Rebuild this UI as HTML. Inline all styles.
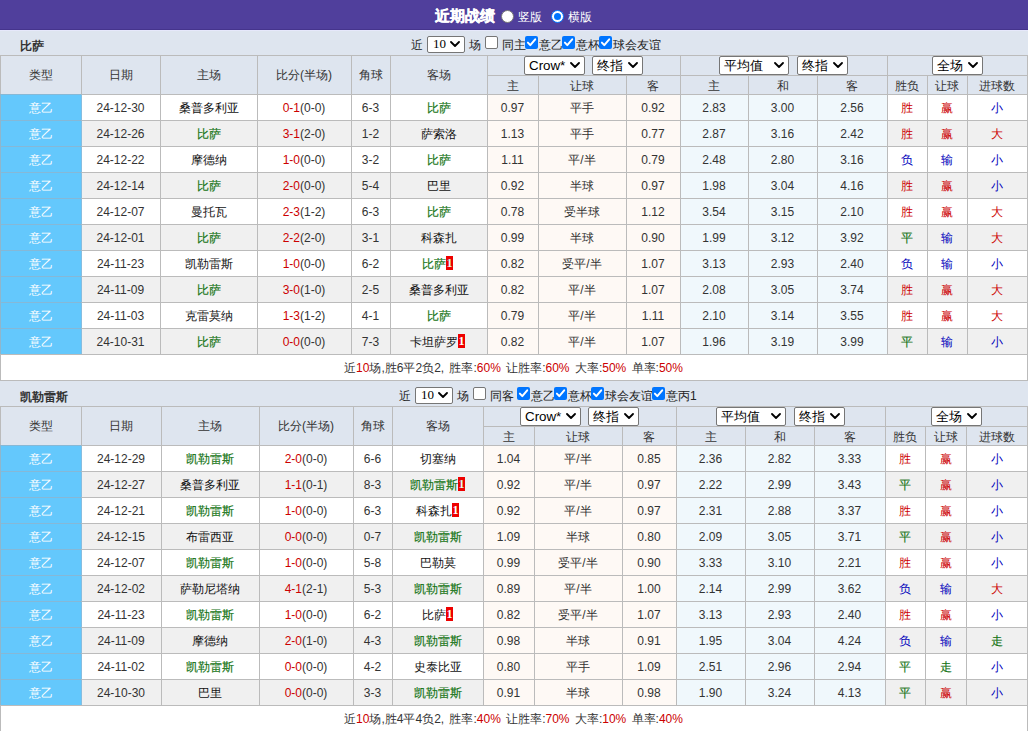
<!DOCTYPE html>
<html><head><meta charset="utf-8"><title>近期战绩</title><style>
*{box-sizing:border-box}
html,body{margin:0;padding:0}
body{width:1030px;height:731px;overflow:hidden;background:#fff;font-family:"Liberation Sans",sans-serif;font-size:12px;color:#333;position:relative}
.top{position:absolute;left:0;top:0;width:1028px;height:30px;background:#503f9c;color:#fff;box-shadow:inset 0 -1px 0 #45348c, 0 1px 0 #e6e8fb;z-index:2}
.top .ti{position:absolute;left:435px;top:7px;font-size:15px;font-weight:bold;line-height:18px;white-space:nowrap;-webkit-text-stroke:0.4px #fff}
.top .lb{position:absolute;top:9px;font-size:12px;line-height:16px;white-space:nowrap}
.rd{position:absolute;top:10px;width:13px;height:13px;border-radius:50%;background:#fff;border:1px solid #767676}
.rd.on{border:1px solid #0075ff}
.rd.on:after{content:"";position:absolute;left:2px;top:2px;width:7px;height:7px;border-radius:50%;background:#0075ff}
.blk{position:absolute;left:0;width:1028px}
.tt{position:relative;height:25px;background:#dee5ef;font-weight:bold;color:#333;padding-left:20px;line-height:33px;font-size:12px;white-space:nowrap}
.tt .ct{position:absolute;top:7px;color:#222;font-weight:normal;line-height:16px;font-size:12px}
.tt .ctl{position:absolute;top:6px;line-height:0}
.tt .cbx{position:absolute;top:6px;line-height:0}
.cb{display:inline-block;width:13px;height:13px;border:1px solid #767676;border-radius:2px;background:#fff}
.cb.on{border:none;background:#0075ff}
.cb svg{display:block}
.sel{display:inline-block;position:relative;height:19px;border:1px solid #767676;border-radius:2px;background:#fff;vertical-align:top;font-weight:normal;color:#000;text-align:left}
.sel .st{position:absolute;left:4px;top:0;line-height:17px;font-size:13.33px;white-space:nowrap}
.sel.s10{height:17px}
.sel.s10 .st{font-family:"Liberation Serif",serif;font-size:13px;line-height:14px;left:5px}
.sel.s10 .cv{top:4px}
.sel .cv{position:absolute;right:4px;top:5px}
table.t{border-collapse:separate;border-spacing:0;table-layout:fixed;width:1028px;border-right:1px solid #bbb;border-bottom:1px solid #bbb}
.t th,.t td{border-left:1px solid #bbb;border-top:1px solid #bbb;padding:0 1px 0 0;text-align:center;font-weight:normal;font-size:12px;overflow:hidden;white-space:nowrap}
.t th{background:#dee5ef;color:#333}
.h1 th{height:20px}
.h1 th.sc{padding-right:0}
.h1 th.sc2{padding-right:1px}
.h1 th.sc{line-height:0;vertical-align:middle}
.h2 th{height:19px;line-height:16px;padding-top:2px}
.t td{height:26px;line-height:23px;padding-top:2px;background:#fff}
.alt td{background:#f0f0f0}
.t td.ty{background:#64c8fc;color:#fff;border-top-color:#86b8d6;border-left-color:#8fb6cc}
.t td.ty+td{border-left-color:#86bde0}
.t td.oa{background:#fef9f5}
.t td.ob{background:#f0f8fc}
.r{color:#cc0000}.g{color:#137313;-webkit-text-stroke:0.15px #137313}.b{color:#0000bb}
.t td.tm{color:#111}
.rc{display:inline-block;background:#e00;color:#fff;font-family:"Liberation Serif",serif;font-weight:bold;font-size:12px;line-height:15px;height:14px;width:7px;margin-right:2px;text-align:center;vertical-align:-2px;overflow:hidden}
.sm td{background:#fff !important;height:26px;word-spacing:2px}
.gap{display:inline-block;width:8px}
</style></head><body>
<div class="top"><span class="ti">近期战绩</span><span class="rd" style="left:501px"></span><span class="lb" style="left:518px">竖版</span><span class="rd on" style="left:551px"></span><span class="lb" style="left:568px">横版</span></div>
<div class="blk" style="top:30px">
<div class="tt">比萨<span class="ct" style="left:411px">近</span><span class="ctl" style="left:427px"><span class="sel s10" style="width:38px"><span class="st">10</span><svg class="cv" width="10" height="6" viewBox="0 0 10 6"><path d="M1 1 L5 5 L9 1" fill="none" stroke="#000" stroke-width="1.8" stroke-linecap="round" stroke-linejoin="round"/></svg></span></span><span class="ct" style="left:469px">场</span><span class="cbx" style="left:485px"><span class="cb"></span></span><span class="ct" style="left:502px">同主</span><span class="cbx" style="left:525px"><span class="cb on"><svg width="13" height="13" viewBox="0 0 13 13"><path d="M2.9 6.6 L5.3 9.1 L10.2 3.3" fill="none" stroke="#fff" stroke-width="2" stroke-linecap="round" stroke-linejoin="round"/></svg></span></span><span class="ct" style="left:539px">意乙</span><span class="cbx" style="left:562px"><span class="cb on"><svg width="13" height="13" viewBox="0 0 13 13"><path d="M2.9 6.6 L5.3 9.1 L10.2 3.3" fill="none" stroke="#fff" stroke-width="2" stroke-linecap="round" stroke-linejoin="round"/></svg></span></span><span class="ct" style="left:576px">意杯</span><span class="cbx" style="left:599px"><span class="cb on"><svg width="13" height="13" viewBox="0 0 13 13"><path d="M2.9 6.6 L5.3 9.1 L10.2 3.3" fill="none" stroke="#fff" stroke-width="2" stroke-linecap="round" stroke-linejoin="round"/></svg></span></span><span class="ct" style="left:613px">球会友谊</span></div>
<table class="t"><colgroup><col style="width:81px"><col style="width:79px"><col style="width:97px"><col style="width:94px"><col style="width:39px"><col style="width:97px"><col style="width:51px"><col style="width:88px"><col style="width:54px"><col style="width:68px"><col style="width:69px"><col style="width:70px"><col style="width:40px"><col style="width:40px"><col style="width:60px"></colgroup>
<tr class="h1"><th rowspan="2">类型</th><th rowspan="2">日期</th><th rowspan="2">主场</th><th rowspan="2">比分(半场)</th><th rowspan="2">角球</th><th rowspan="2">客场</th><th colspan="3" class="sc sc2"><span class="sel " style="width:61px"><span class="st">Crow*</span><svg class="cv" width="10" height="6" viewBox="0 0 10 6"><path d="M1 1 L5 5 L9 1" fill="none" stroke="#000" stroke-width="1.8" stroke-linecap="round" stroke-linejoin="round"/></svg></span><i class="gap" style="width:7px"></i><span class="sel " style="width:51px"><span class="st">终指</span><svg class="cv" width="10" height="6" viewBox="0 0 10 6"><path d="M1 1 L5 5 L9 1" fill="none" stroke="#000" stroke-width="1.8" stroke-linecap="round" stroke-linejoin="round"/></svg></span></th><th colspan="3" class="sc sc2"><span class="sel " style="width:70px"><span class="st">平均值</span><svg class="cv" width="10" height="6" viewBox="0 0 10 6"><path d="M1 1 L5 5 L9 1" fill="none" stroke="#000" stroke-width="1.8" stroke-linecap="round" stroke-linejoin="round"/></svg></span><i class="gap" style="width:8px"></i><span class="sel " style="width:51px"><span class="st">终指</span><svg class="cv" width="10" height="6" viewBox="0 0 10 6"><path d="M1 1 L5 5 L9 1" fill="none" stroke="#000" stroke-width="1.8" stroke-linecap="round" stroke-linejoin="round"/></svg></span></th><th colspan="3" class="sc"><span class="sel " style="width:51px"><span class="st">全场</span><svg class="cv" width="10" height="6" viewBox="0 0 10 6"><path d="M1 1 L5 5 L9 1" fill="none" stroke="#000" stroke-width="1.8" stroke-linecap="round" stroke-linejoin="round"/></svg></span></th></tr>
<tr class="h2"><th>主</th><th>让球</th><th>客</th><th>主</th><th>和</th><th>客</th><th>胜负</th><th>让球</th><th>进球数</th></tr>
<tr><td class="ty">意乙</td><td>24-12-30</td><td class="tm">桑普多利亚</td><td><span class="r">0-1</span>(0-0)</td><td>6-3</td><td class="g">比萨</td><td class="oa">0.97</td><td class="oa">平手</td><td class="oa">0.92</td><td class="ob">2.83</td><td class="ob">3.00</td><td class="ob">2.56</td><td class="r">胜</td><td class="r">赢</td><td class="b">小</td></tr>
<tr class="alt"><td class="ty">意乙</td><td>24-12-26</td><td class="g">比萨</td><td><span class="r">3-1</span>(2-0)</td><td>1-2</td><td class="tm">萨索洛</td><td class="oa">1.13</td><td class="oa">平手</td><td class="oa">0.77</td><td class="ob">2.87</td><td class="ob">3.16</td><td class="ob">2.42</td><td class="r">胜</td><td class="r">赢</td><td class="r">大</td></tr>
<tr><td class="ty">意乙</td><td>24-12-22</td><td class="tm">摩德纳</td><td><span class="r">1-0</span>(0-0)</td><td>3-2</td><td class="g">比萨</td><td class="oa">1.11</td><td class="oa">平/半</td><td class="oa">0.79</td><td class="ob">2.48</td><td class="ob">2.80</td><td class="ob">3.16</td><td class="b">负</td><td class="b">输</td><td class="b">小</td></tr>
<tr class="alt"><td class="ty">意乙</td><td>24-12-14</td><td class="g">比萨</td><td><span class="r">2-0</span>(0-0)</td><td>5-4</td><td class="tm">巴里</td><td class="oa">0.92</td><td class="oa">半球</td><td class="oa">0.97</td><td class="ob">1.98</td><td class="ob">3.04</td><td class="ob">4.16</td><td class="r">胜</td><td class="r">赢</td><td class="b">小</td></tr>
<tr><td class="ty">意乙</td><td>24-12-07</td><td class="tm">曼托瓦</td><td><span class="r">2-3</span>(1-2)</td><td>6-3</td><td class="g">比萨</td><td class="oa">0.78</td><td class="oa">受半球</td><td class="oa">1.12</td><td class="ob">3.54</td><td class="ob">3.15</td><td class="ob">2.10</td><td class="r">胜</td><td class="r">赢</td><td class="r">大</td></tr>
<tr class="alt"><td class="ty">意乙</td><td>24-12-01</td><td class="g">比萨</td><td><span class="r">2-2</span>(2-0)</td><td>3-1</td><td class="tm">科森扎</td><td class="oa">0.99</td><td class="oa">半球</td><td class="oa">0.90</td><td class="ob">1.99</td><td class="ob">3.12</td><td class="ob">3.92</td><td class="g">平</td><td class="b">输</td><td class="r">大</td></tr>
<tr><td class="ty">意乙</td><td>24-11-23</td><td class="tm">凯勒雷斯</td><td><span class="r">1-0</span>(0-0)</td><td>6-2</td><td class="g">比萨<span class="rc">1</span></td><td class="oa">0.82</td><td class="oa">受平/半</td><td class="oa">1.07</td><td class="ob">3.13</td><td class="ob">2.93</td><td class="ob">2.40</td><td class="b">负</td><td class="b">输</td><td class="b">小</td></tr>
<tr class="alt"><td class="ty">意乙</td><td>24-11-09</td><td class="g">比萨</td><td><span class="r">3-0</span>(1-0)</td><td>2-5</td><td class="tm">桑普多利亚</td><td class="oa">0.82</td><td class="oa">平/半</td><td class="oa">1.07</td><td class="ob">2.08</td><td class="ob">3.05</td><td class="ob">3.74</td><td class="r">胜</td><td class="r">赢</td><td class="r">大</td></tr>
<tr><td class="ty">意乙</td><td>24-11-03</td><td class="tm">克雷莫纳</td><td><span class="r">1-3</span>(1-2)</td><td>4-1</td><td class="g">比萨</td><td class="oa">0.79</td><td class="oa">平/半</td><td class="oa">1.11</td><td class="ob">2.10</td><td class="ob">3.14</td><td class="ob">3.55</td><td class="r">胜</td><td class="r">赢</td><td class="r">大</td></tr>
<tr class="alt"><td class="ty">意乙</td><td>24-10-31</td><td class="g">比萨</td><td><span class="r">0-0</span>(0-0)</td><td>7-3</td><td class="tm">卡坦萨罗<span class="rc">1</span></td><td class="oa">0.82</td><td class="oa">平/半</td><td class="oa">1.07</td><td class="ob">1.96</td><td class="ob">3.19</td><td class="ob">3.99</td><td class="g">平</td><td class="b">输</td><td class="b">小</td></tr>
<tr class="sm"><td colspan="15">近<span class="r">10</span>场,胜6平2负2, 胜率:<span class="r">60%</span> 让胜率:<span class="r">60%</span> 大率:<span class="r">50%</span> 单率:<span class="r">50%</span></td></tr>
</table>
</div>
<div class="blk" style="top:381px">
<div class="tt">凯勒雷斯<span class="ct" style="left:399px">近</span><span class="ctl" style="left:415px"><span class="sel s10" style="width:38px"><span class="st">10</span><svg class="cv" width="10" height="6" viewBox="0 0 10 6"><path d="M1 1 L5 5 L9 1" fill="none" stroke="#000" stroke-width="1.8" stroke-linecap="round" stroke-linejoin="round"/></svg></span></span><span class="ct" style="left:457px">场</span><span class="cbx" style="left:473px"><span class="cb"></span></span><span class="ct" style="left:490px">同客</span><span class="cbx" style="left:517px"><span class="cb on"><svg width="13" height="13" viewBox="0 0 13 13"><path d="M2.9 6.6 L5.3 9.1 L10.2 3.3" fill="none" stroke="#fff" stroke-width="2" stroke-linecap="round" stroke-linejoin="round"/></svg></span></span><span class="ct" style="left:531px">意乙</span><span class="cbx" style="left:554px"><span class="cb on"><svg width="13" height="13" viewBox="0 0 13 13"><path d="M2.9 6.6 L5.3 9.1 L10.2 3.3" fill="none" stroke="#fff" stroke-width="2" stroke-linecap="round" stroke-linejoin="round"/></svg></span></span><span class="ct" style="left:568px">意杯</span><span class="cbx" style="left:591px"><span class="cb on"><svg width="13" height="13" viewBox="0 0 13 13"><path d="M2.9 6.6 L5.3 9.1 L10.2 3.3" fill="none" stroke="#fff" stroke-width="2" stroke-linecap="round" stroke-linejoin="round"/></svg></span></span><span class="ct" style="left:605px">球会友谊</span><span class="cbx" style="left:652px"><span class="cb on"><svg width="13" height="13" viewBox="0 0 13 13"><path d="M2.9 6.6 L5.3 9.1 L10.2 3.3" fill="none" stroke="#fff" stroke-width="2" stroke-linecap="round" stroke-linejoin="round"/></svg></span></span><span class="ct" style="left:666px">意丙1</span></div>
<table class="t"><colgroup><col style="width:81px"><col style="width:80px"><col style="width:98px"><col style="width:94px"><col style="width:39px"><col style="width:91px"><col style="width:51px"><col style="width:88px"><col style="width:54px"><col style="width:69px"><col style="width:69px"><col style="width:71px"><col style="width:40px"><col style="width:41px"><col style="width:61px"></colgroup>
<tr class="h1"><th rowspan="2">类型</th><th rowspan="2">日期</th><th rowspan="2">主场</th><th rowspan="2">比分(半场)</th><th rowspan="2">角球</th><th rowspan="2">客场</th><th colspan="3" class="sc sc2"><span class="sel " style="width:61px"><span class="st">Crow*</span><svg class="cv" width="10" height="6" viewBox="0 0 10 6"><path d="M1 1 L5 5 L9 1" fill="none" stroke="#000" stroke-width="1.8" stroke-linecap="round" stroke-linejoin="round"/></svg></span><i class="gap" style="width:7px"></i><span class="sel " style="width:51px"><span class="st">终指</span><svg class="cv" width="10" height="6" viewBox="0 0 10 6"><path d="M1 1 L5 5 L9 1" fill="none" stroke="#000" stroke-width="1.8" stroke-linecap="round" stroke-linejoin="round"/></svg></span></th><th colspan="3" class="sc sc2"><span class="sel " style="width:70px"><span class="st">平均值</span><svg class="cv" width="10" height="6" viewBox="0 0 10 6"><path d="M1 1 L5 5 L9 1" fill="none" stroke="#000" stroke-width="1.8" stroke-linecap="round" stroke-linejoin="round"/></svg></span><i class="gap" style="width:8px"></i><span class="sel " style="width:51px"><span class="st">终指</span><svg class="cv" width="10" height="6" viewBox="0 0 10 6"><path d="M1 1 L5 5 L9 1" fill="none" stroke="#000" stroke-width="1.8" stroke-linecap="round" stroke-linejoin="round"/></svg></span></th><th colspan="3" class="sc"><span class="sel " style="width:51px"><span class="st">全场</span><svg class="cv" width="10" height="6" viewBox="0 0 10 6"><path d="M1 1 L5 5 L9 1" fill="none" stroke="#000" stroke-width="1.8" stroke-linecap="round" stroke-linejoin="round"/></svg></span></th></tr>
<tr class="h2"><th>主</th><th>让球</th><th>客</th><th>主</th><th>和</th><th>客</th><th>胜负</th><th>让球</th><th>进球数</th></tr>
<tr><td class="ty">意乙</td><td>24-12-29</td><td class="g">凯勒雷斯</td><td><span class="r">2-0</span>(0-0)</td><td>6-6</td><td class="tm">切塞纳</td><td class="oa">1.04</td><td class="oa">平/半</td><td class="oa">0.85</td><td class="ob">2.36</td><td class="ob">2.82</td><td class="ob">3.33</td><td class="r">胜</td><td class="r">赢</td><td class="b">小</td></tr>
<tr class="alt"><td class="ty">意乙</td><td>24-12-27</td><td class="tm">桑普多利亚</td><td><span class="r">1-1</span>(0-1)</td><td>8-3</td><td class="g">凯勒雷斯<span class="rc" style="margin-right:0">1</span></td><td class="oa">0.92</td><td class="oa">平/半</td><td class="oa">0.97</td><td class="ob">2.22</td><td class="ob">2.99</td><td class="ob">3.43</td><td class="g">平</td><td class="r">赢</td><td class="b">小</td></tr>
<tr><td class="ty">意乙</td><td>24-12-21</td><td class="g">凯勒雷斯</td><td><span class="r">1-0</span>(0-0)</td><td>6-3</td><td class="tm">科森扎<span class="rc" style="margin-right:0">1</span></td><td class="oa">0.92</td><td class="oa">平/半</td><td class="oa">0.97</td><td class="ob">2.31</td><td class="ob">2.88</td><td class="ob">3.37</td><td class="r">胜</td><td class="r">赢</td><td class="b">小</td></tr>
<tr class="alt"><td class="ty">意乙</td><td>24-12-15</td><td class="tm">布雷西亚</td><td><span class="r">0-0</span>(0-0)</td><td>0-7</td><td class="g">凯勒雷斯</td><td class="oa">1.09</td><td class="oa">半球</td><td class="oa">0.80</td><td class="ob">2.09</td><td class="ob">3.05</td><td class="ob">3.71</td><td class="g">平</td><td class="r">赢</td><td class="b">小</td></tr>
<tr><td class="ty">意乙</td><td>24-12-07</td><td class="g">凯勒雷斯</td><td><span class="r">1-0</span>(0-0)</td><td>5-8</td><td class="tm">巴勒莫</td><td class="oa">0.99</td><td class="oa">受平/半</td><td class="oa">0.90</td><td class="ob">3.33</td><td class="ob">3.10</td><td class="ob">2.21</td><td class="r">胜</td><td class="r">赢</td><td class="b">小</td></tr>
<tr class="alt"><td class="ty">意乙</td><td>24-12-02</td><td class="tm">萨勒尼塔纳</td><td><span class="r">4-1</span>(2-1)</td><td>5-3</td><td class="g">凯勒雷斯</td><td class="oa">0.89</td><td class="oa">平/半</td><td class="oa">1.00</td><td class="ob">2.14</td><td class="ob">2.99</td><td class="ob">3.62</td><td class="b">负</td><td class="b">输</td><td class="r">大</td></tr>
<tr><td class="ty">意乙</td><td>24-11-23</td><td class="g">凯勒雷斯</td><td><span class="r">1-0</span>(0-0)</td><td>6-2</td><td class="tm">比萨<span class="rc" style="margin-right:0">1</span></td><td class="oa">0.82</td><td class="oa">受平/半</td><td class="oa">1.07</td><td class="ob">3.13</td><td class="ob">2.93</td><td class="ob">2.40</td><td class="r">胜</td><td class="r">赢</td><td class="b">小</td></tr>
<tr class="alt"><td class="ty">意乙</td><td>24-11-09</td><td class="tm">摩德纳</td><td><span class="r">2-0</span>(1-0)</td><td>4-3</td><td class="g">凯勒雷斯</td><td class="oa">0.98</td><td class="oa">半球</td><td class="oa">0.91</td><td class="ob">1.95</td><td class="ob">3.04</td><td class="ob">4.24</td><td class="b">负</td><td class="b">输</td><td class="g">走</td></tr>
<tr><td class="ty">意乙</td><td>24-11-02</td><td class="g">凯勒雷斯</td><td><span class="r">0-0</span>(0-0)</td><td>4-2</td><td class="tm">史泰比亚</td><td class="oa">0.80</td><td class="oa">平手</td><td class="oa">1.09</td><td class="ob">2.51</td><td class="ob">2.96</td><td class="ob">2.94</td><td class="g">平</td><td class="g">走</td><td class="b">小</td></tr>
<tr class="alt"><td class="ty">意乙</td><td>24-10-30</td><td class="tm">巴里</td><td><span class="r">0-0</span>(0-0)</td><td>3-3</td><td class="g">凯勒雷斯</td><td class="oa">0.91</td><td class="oa">半球</td><td class="oa">0.98</td><td class="ob">1.90</td><td class="ob">3.24</td><td class="ob">4.13</td><td class="g">平</td><td class="r">赢</td><td class="b">小</td></tr>
<tr class="sm"><td colspan="15">近<span class="r">10</span>场,胜4平4负2, 胜率:<span class="r">40%</span> 让胜率:<span class="r">70%</span> 大率:<span class="r">10%</span> 单率:<span class="r">40%</span></td></tr>
</table>
</div>
</body></html>
